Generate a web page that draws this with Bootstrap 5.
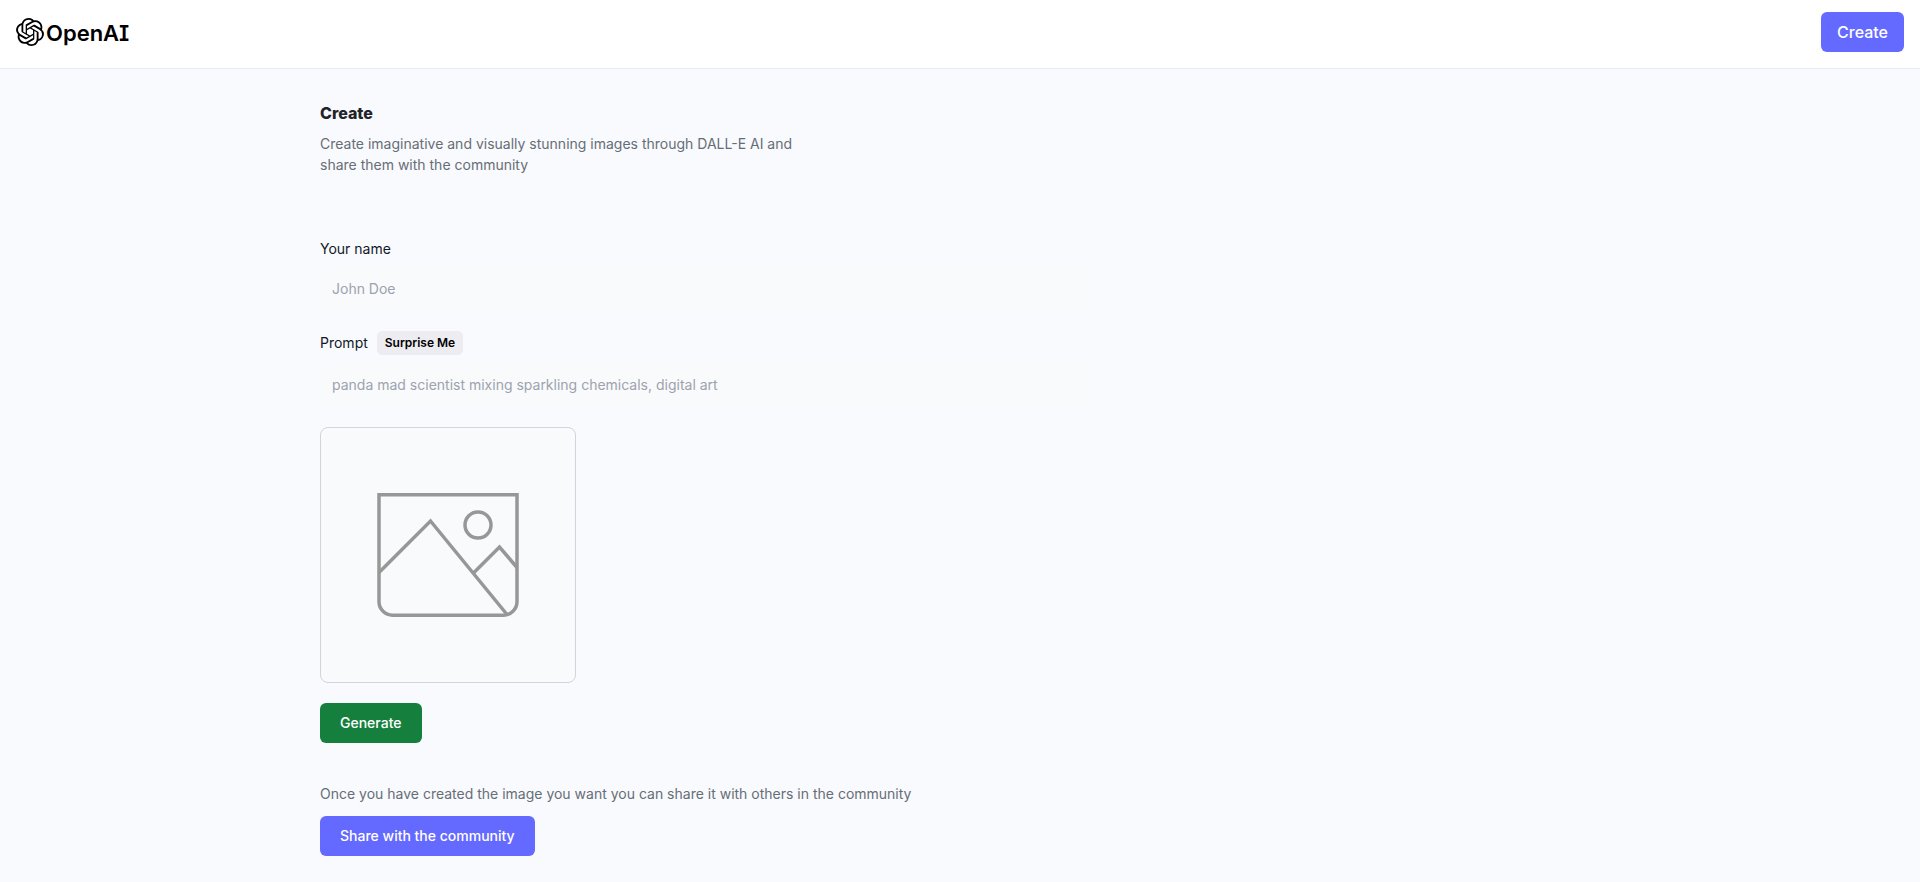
<!DOCTYPE html>
<html lang="en">
<head>
<meta charset="utf-8">
<meta name="viewport" content="width=device-width, initial-scale=1">
<title>Create | DALL-E</title>
<link href="https://cdn.jsdelivr.net/npm/bootstrap@5.3.0/dist/css/bootstrap.min.css" rel="stylesheet">
<style>
  body { font-family: Inter, sans-serif; font-size: 14px; line-height: 21px; background: #f9fafe; color: #222328; }
  .site-header { background: #fff; border-bottom: 1px solid #e6ebf4; padding: 12px 16px 16px; }
  .brand { color: #000; font-size: 22px; line-height: 30px; font-weight: 600; font-feature-settings: "cv08"; gap: 2px; }
  .brand-name { padding-top: 2px; }
  .page { max-width: 1344px; padding: 32px; }
  .page-title { font-size: 16px; line-height: 24px; font-weight: 800; margin-bottom: 8px; }
  .muted { color: #666e75; }
  .intro { max-width: 500px; margin-bottom: 64px; }
  .create-form { max-width: 768px; }
  .field-label { color: #111827; line-height: 20px; }
  .field-input, .field-input:focus { background: #f9fafb; border: 0; border-radius: 8px; padding: 12px; font-size: 14px; line-height: 20px; color: #111827; }
  .field-input::placeholder { color: #9ca3af; }
  .stack { gap: 20px; }
  .prompt-head { gap: 9px; }
  .btn-app { font-size: 14px; line-height: 20px; font-weight: 500; color: #fff; border: 0; border-radius: 6px; padding: 10px 20px; }
  .btn-app:hover { color: #fff; }
  .btn-violet, .btn-violet:hover { background: #6469ff; }
  .btn-green, .btn-green:hover { background: #15803d; }
  .btn-nav { font-size: 16px; padding: 10px 16px; }
  .btn-surprise, .btn-surprise:hover { background: #ececf1; color: #000; font-size: 12px; line-height: 16px; font-weight: 600; border: 0; border-radius: 5px; padding: 4px 8px; }
  .preview { width: 256px; height: 256px; background: #f9fafb; border: 1px solid #d1d5db; border-radius: 8px; }
  .share { margin-top: 40px; }
  .share-note { margin-bottom: 12px; }
</style>
</head>
<body>
<header class="site-header d-flex justify-content-between align-items-start">
  <a href="#" class="brand d-flex align-items-center text-decoration-none pt-1">
    <svg width="28" height="28" viewBox="0 0 24 24" fill="currentColor" aria-hidden="true"><path d="M22.2819 9.8211a5.9847 5.9847 0 0 0-.5157-4.9108 6.0462 6.0462 0 0 0-6.5098-2.9A6.0651 6.0651 0 0 0 4.9807 4.1818a5.9847 5.9847 0 0 0-3.9977 2.9 6.0462 6.0462 0 0 0 .7427 7.0966 5.98 5.98 0 0 0 .511 4.9107 6.051 6.051 0 0 0 6.5146 2.9001A5.9847 5.9847 0 0 0 13.2599 24a6.0557 6.0557 0 0 0 5.7718-4.2058 5.9894 5.9894 0 0 0 3.9977-2.9001 6.0557 6.0557 0 0 0-.7475-7.0729zm-9.022 12.6081a4.4755 4.4755 0 0 1-2.8764-1.0408l.1419-.0804 4.7783-2.7582a.7948.7948 0 0 0 .3927-.6813v-6.7369l2.02 1.1686a.071.071 0 0 1 .038.052v5.5826a4.504 4.504 0 0 1-4.4945 4.4944zm-9.6607-4.1254a4.4708 4.4708 0 0 1-.5346-3.0137l.142.0852 4.783 2.7582a.7712.7712 0 0 0 .7806 0l5.8428-3.3685v2.3324a.0804.0804 0 0 1-.0332.0615L9.74 19.9502a4.4992 4.4992 0 0 1-6.1408-1.6464zM2.3408 7.8956a4.485 4.485 0 0 1 2.3655-1.9728V11.6a.7664.7664 0 0 0 .3879.6765l5.8144 3.3543-2.0201 1.1685a.0757.0757 0 0 1-.071 0l-4.8303-2.7865A4.504 4.504 0 0 1 2.3408 7.872zm16.5963 3.8558L13.1038 8.364 15.1192 7.2a.0757.0757 0 0 1 .071 0l4.8303 2.7913a4.4944 4.4944 0 0 1-.6765 8.1042v-5.6772a.79.79 0 0 0-.407-.667zm2.0107-3.0231l-.142-.0852-4.7735-2.7818a.7759.7759 0 0 0-.7854 0L9.409 9.2297V6.8974a.0662.0662 0 0 1 .0284-.0615l4.8303-2.7866a4.4992 4.4992 0 0 1 6.6802 4.66zM8.3065 12.863l-2.02-1.1638a.0804.0804 0 0 1-.038-.0567V6.0742a4.4992 4.4992 0 0 1 7.3757-3.4537l-.142.0805L8.704 5.459a.7948.7948 0 0 0-.3927.6813zm1.0976-2.3654l2.602-1.4998 2.6069 1.4998v2.9994l-2.5974 1.4997-2.6067-1.4997Z"/></svg>
    <span class="brand-name">OpenAI</span>
  </a>
  <button type="button" class="btn btn-app btn-violet btn-nav">Create</button>
</header>
<main class="page container-fluid">
  <h1 class="page-title">Create</h1>
  <p class="intro muted">Create imaginative and visually stunning images through DALL-E AI and share them with the community</p>
  <form class="create-form">
    <div class="stack d-flex flex-column">
      <div>
        <label for="name" class="field-label d-block mb-2">Your name</label>
        <input id="name" type="text" class="form-control field-input" placeholder="John Doe">
      </div>
      <div>
        <div class="prompt-head d-flex align-items-center mb-2">
          <label for="prompt" class="field-label">Prompt</label>
          <button type="button" class="btn btn-surprise">Surprise Me</button>
        </div>
        <input id="prompt" type="text" class="form-control field-input" placeholder="panda mad scientist mixing sparkling chemicals, digital art">
      </div>
      <div class="preview d-flex align-items-center justify-content-center">
        <svg width="142" height="124" viewBox="0 0 142 124" fill="none" stroke="#969796" stroke-width="3.5" role="img" aria-label="preview">
          <path d="M2 1.8H140V109A13.5 13.5 0 0 1 126.5 122.2H15.5A13.5 13.5 0 0 1 2 109Z"/>
          <path d="M2 79.500L53.500 28L130 121.500M96.500 80L122.500 54L140 74.500"/>
          <circle cx="101" cy="32" r="13"/>
        </svg>
      </div>
      <button type="button" class="btn btn-app btn-green align-self-start">Generate</button>
    </div>
    <div class="share">
      <p class="share-note muted">Once you have created the image you want you can share it with others in the community</p>
      <button type="submit" class="btn btn-app btn-violet">Share with the community</button>
    </div>
  </form>
</main>
<script src="https://cdn.jsdelivr.net/npm/bootstrap@5.3.0/dist/js/bootstrap.bundle.min.js"></script>
</body>
</html>
